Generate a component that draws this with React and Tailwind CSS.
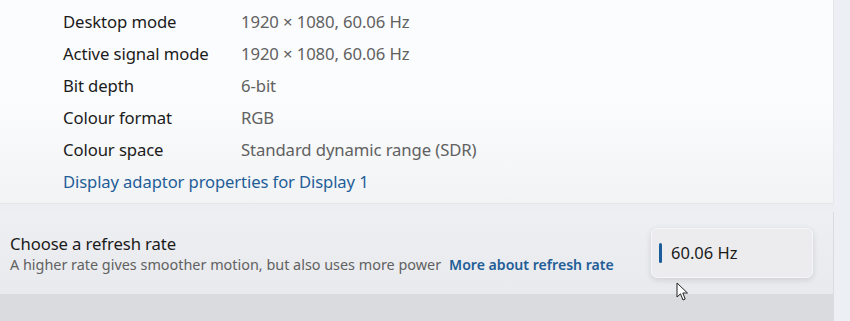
const ROWS = [
  ['Desktop mode', '1920 × 1080, 60.06 Hz'],
  ['Active signal mode', '1920 × 1080, 60.06 Hz'],
  ['Bit depth', '6-bit'],
  ['Colour format', 'RGB'],
  ['Colour space', 'Standard dynamic range (SDR)'],
]

function Cursor() {
  return (
    <svg width="14" height="20" viewBox="0 0 14 20" className="absolute left-[676px] top-[282px]">
      <path d="M1 1 L1 15 L4.5 11.8 L7 18 L9.2 17 L6.8 11 L11.5 11 Z" fill="#fff" stroke="#222" strokeWidth="1" strokeLinejoin="round" />
    </svg>
  )
}

export default function App() {
  return (
    <div
      className="relative w-[850px] h-[321px] overflow-hidden bg-[#eceef2] flex"
      style={{ fontFamily: '"Noto Sans", "Open Sans", sans-serif' }}
    >
      <div className="w-[834px] flex flex-col">
        <div className="h-[204px] bg-gradient-to-b from-[#fbfcfd] via-[#fbfcfd] to-[#f2f3f5] border-r border-b border-[#e4e6e9] pl-[63px] pt-[6px] flex flex-col">
          {ROWS.map(([k, v]) => (
            <div key={k} className="h-[32px] flex items-center text-[16.7px] tracking-[-0.1px]">
              <span className="w-[178px] text-[#1b1b1b]">{k}</span>
              <span className="text-[#616161]">{v}</span>
            </div>
          ))}
          <div className="h-[32px] flex items-center text-[16.6px] tracking-[-0.1px] text-[#1f5e98]">
            Display adaptor properties for Display 1
          </div>
        </div>
        <div className="h-[8px]" />
        <div className="h-[83px] bg-gradient-to-b from-[#eeeff2] to-[#e9eaed] border-b border-r border-[#d9dbdf] flex items-center pl-[10px] pr-[20px]">
          <div className="flex-1 flex flex-col pt-[2px]">
            <span className="text-[16.7px] leading-[22px] text-[#1b1b1b] tracking-[-0.1px]">Choose a refresh rate</span>
            <div className="flex items-center gap-[8px] text-[14.4px] leading-[20px]">
              <span className="text-[#616161]">A higher rate gives smoother motion, but also uses more power</span>
              <span className="text-[#1f5e98] font-semibold text-[14.1px]">More about refresh rate</span>
            </div>
          </div>
          <div className="w-[162px] h-[50px] rounded-[6px] bg-[#ececee] border border-[#f6f6f7] shadow-[0_2px_6px_rgba(0,0,0,0.12)] flex items-center pl-[7px] gap-[9px]">
            <div className="w-[3px] h-[20px] rounded-full bg-[#1b5c9c]" />
            <span className="text-[16.5px] text-[#1b1b1b]">60.06 Hz</span>
          </div>
        </div>
        <div className="flex-1 bg-[#d9dbdf]" />
      </div>
      <div className="flex-1 bg-[#eceff3]" />
      <Cursor />
    </div>
  )
}
